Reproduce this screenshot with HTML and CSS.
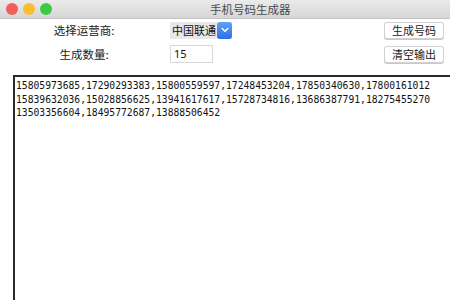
FILE: index.html
```html
<!DOCTYPE html>
<html lang="zh">
  <head>
    <meta charset="UTF-8" />
    <title>手机号码生成器</title>
    <link rel="stylesheet" href="styles.css">
  </head>
  <body>
    <div class="window">
      <div class="titlebar">
        <div class="lights">
          <span class="light red"></span>
          <span class="light yellow"></span>
          <span class="light green"></span>
        </div>
        <div class="title">手机号码生成器</div>
      </div>

      <div class="controls">
        <label class="label">选择运营商:</label>
        <div class="select">
          <span class="select-text">中国联通</span>
          <span class="select-arrow">
            <svg width="8" height="6" viewBox="0 0 8 6">
              <path d="M1.2 1.5 L4 4.3 L6.8 1.5" fill="none" stroke="#fff" stroke-width="1.5" stroke-linecap="round" stroke-linejoin="round"/>
            </svg>
          </span>
        </div>
        <button class="btn">生成号码</button>

        <label class="label">生成数量:</label>
        <div class="input">15</div>
        <button class="btn">清空输出</button>
      </div>

      <div class="output">15805973685,17290293383,15800559597,17248453204,17850340630,17800161012
15839632036,15028856625,13941617617,15728734816,13686387791,18275455270
13503356604,18495772687,13888506452</div>
    </div>
  </body>
</html>
```

FILE: styles.css
```css
* {
  margin: 0;
  padding: 0;
  box-sizing: border-box;
}

body {
  background: #fff;
  font-family: "Noto Sans CJK SC", "Noto Sans", sans-serif;
  color: #222;
}

.window {
  width: 450px;
  height: 300px;
  display: flex;
  flex-direction: column;
  overflow: hidden;
}

.titlebar {
  height: 19px;
  flex: none;
  display: flex;
  align-items: center;
  background: linear-gradient(to bottom, #ebebeb, #d6d6d6);
  border-bottom: 1px solid #c4c4c4;
}

.lights {
  display: flex;
  gap: 5px;
  padding-left: 6px;
}

.light {
  width: 12px;
  height: 12px;
  border-radius: 50%;
}

.red {
  background: #f25f58;
}

.yellow {
  background: #fbbd2e;
}

.green {
  background: #3dc845;
}

.title {
  margin-left: 158px;
  font-size: 11.5px;
  color: #4a4a4a;
  line-height: 19px;
}

.controls {
  flex: none;
  display: grid;
  grid-template-columns: 168px 216px 62px;
  grid-auto-rows: 18px;
  row-gap: 6px;
  align-items: center;
  padding-top: 2px;
}

.label {
  text-align: center;
  font-size: 11.5px;
  line-height: 18px;
  color: #222;
}

.select {
  margin-left: 2px;
  width: 62px;
  height: 17px;
  display: flex;
  align-items: center;
  background: #e8e8e8;
}

.select-text {
  font-size: 11px;
  padding-left: 2px;
  width: 47px;
  line-height: 17px;
  color: #111;
}

.select-arrow {
  width: 15px;
  height: 17px;
  border-radius: 3px;
  background: linear-gradient(to bottom, #5ea2f7, #2f6fe4);
  display: flex;
  align-items: center;
  justify-content: center;
}

.input {
  margin-left: 2px;
  width: 43px;
  height: 18px;
  border: 1px solid #d8d8d8;
  background: #fff;
  font-family: "Noto Sans", sans-serif;
  font-size: 11px;
  line-height: 16px;
  padding-left: 3px;
  color: #111;
}

.btn {
  width: 60px;
  height: 17px;
  border: 1px solid #d0d0d0;
  border-radius: 3px;
  background: #fff;
  box-shadow: 0 1px 0 #c8c8c8;
  font-family: "Noto Sans CJK SC", sans-serif;
  font-size: 11px;
  line-height: 15px;
  color: #222;
}

.output {
  flex: 1;
  margin: 12px 0 0 13px;
  border-top: 2px solid #2a2a2a;
  border-left: 2px solid #2a2a2a;
  padding: 2px 0 0 1px;
  white-space: pre;
  overflow: hidden;
  font-family: "DejaVu Sans Mono", monospace;
  font-size: 9.7px;
  line-height: 13.5px;
  color: #111;
}
```
